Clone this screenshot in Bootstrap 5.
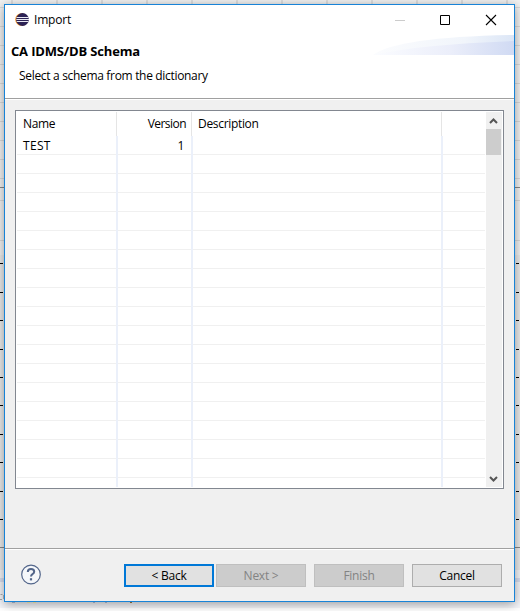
<!DOCTYPE html>
<html lang="en">
<head>
<meta charset="utf-8">
<meta name="viewport" content="width=device-width, initial-scale=1">
<title>Import</title>
<link href="https://cdn.jsdelivr.net/npm/bootstrap@5.3.0/dist/css/bootstrap.min.css" rel="stylesheet">
<style>
html, body { height: 611px; overflow: hidden; }
body { font-family: "Open Sans", "Noto Sans", sans-serif; font-size: 12px; letter-spacing: -.32px; line-height: 16px; color: #000; background: #fff; }
.desk { width: 520px; height: 611px; padding: 4px 5px 9px 4px; }
.backdrop { left: 0; top: 0; }
.dialog { width: 511px; height: 598px; border: 1px solid #1883d7; background: #f0f0f0; box-shadow: 0 2px 10px rgba(0,0,0,.38); }
.titlebar { height: 30px; padding-left: 10px; }
.title-text { margin-left: 5px; letter-spacing: -.2px; }
.heading-area { height: 63px; }
.banner-title { font-size: 13px; font-weight: 700; padding: 8px 0 0 6px; letter-spacing: -.16px; }
.banner-text { padding: 9px 0 0 14px; }
.wave { right: 0; top: 0; }
.win-controls { margin-right: 17px; }
.rule { height: 2px; background: #fff; border-top: 1px solid #a0a0a0; }
.content-area { height: 448px; padding: 10px; }
.grid-box { width: 489px; height: 379px; border: 1px solid #828790; background: #fff; padding: 1px; }
.grid-table { width: 468px; margin-right: 1px; }
.grid-head { height: 24px; }
.grid-head > div { border-right: 1px solid #e5e5e5; padding-top: 4px; }
.c1 { width: 100px; padding-left: 6px; }
.c2 { width: 75px; padding-right: 5px; text-align: right; }
.grid-head .c2 { letter-spacing: -.55px; }
.c3 { width: 250px; padding-left: 6px; }
.grid-body { height: 351px; overflow: hidden; }
.grid-body .grid-line { height: 19px; border-bottom: 1px solid #f0f0f0; flex: none; }
.grid-body .grid-line > div { height: 19px; border-right: 2px solid #ebf0fa; padding-top: 2px; }
.grid-body .c1 { width: 101px; letter-spacing: .3px; }
.grid-body .c2 { padding-right: 7px; }
.scroll { width: 16px; height: 375px; background: #f0f0f0; }
.thumb { width: 15px; height: 26px; background: #cdcdcd; }
.foot { height: 51px; padding: 14px 12px 0 15px; }
.dlg-btn { width: 90px; height: 23px; border: 1px solid #adadad; background: #e1e1e1; padding: 0; border-radius: 0; font-size: 12px; letter-spacing: -.25px; line-height: 21px; color: #000; }
.dlg-btn.primary { border: 2px solid #0078d7; line-height: 19px; }
.dlg-btn.next { margin-left: 2px; }
.dlg-btn:disabled { background: #ccc; border-color: #bfbfbf; color: #838383; opacity: 1; }
</style>
<script src="https://cdn.jsdelivr.net/npm/bootstrap@5.3.0/dist/js/bootstrap.bundle.min.js"></script>
</head>
<body>
<div class="desk position-relative">
  <svg class="backdrop position-absolute" width="520" height="611" shape-rendering="crispEdges">
    <rect width="520" height="570" fill="#f2f2f2"/>
    <rect y="255" width="520" height="315" fill="#ebebeb"/>
    <rect y="570" width="520" height="41" fill="#f4f5f9"/>
    <rect y="578" width="520" height="4" fill="#d9dff0"/>
    <rect y="608" width="520" height="3" fill="#fff"/>
    <path d="M12 0V5M57 0V5M102 0V5M147 0V5M192 0V5M237 0V5M282 0V5M327 0V5M372 0V5M417 0V5M462 0V5M507 0V5" stroke="#dedede" stroke-width="2"/>
    <path d="M0 7.500H520M0 26.500H520M0 45.500H520M0 64.500H520M0 83.500H520M0 102.500H520M0 121.500H520M0 140.500H520M0 159.500H520M0 178.500H520M0 200.500H520M0 240.500H520" stroke="#dadada"/>
    <path d="M0 187.500H520M0 547.500H520" stroke="#888"/>
  </svg>
  <main class="dialog position-relative">
    <div class="bg-white">
      <div class="titlebar d-flex align-items-center">
        <svg width="14" height="14" viewBox="0 0 14 14"><circle cx="6.500" cy="6.500" r="6.300" fill="#f7941e"/><circle cx="7.500" cy="6.500" r="6.400" fill="#2c2255"/><path d="M1.500 4.500H13.500M1.300 6.500H14M1.700 8.500H13.500" stroke="#e8e8f2"/></svg>
        <span class="title-text">Import</span>
        <svg class="win-controls ms-auto" width="104" height="12"><path d="M2 6.500H12" stroke="#ccc"/><path d="M47.500 1.500h9v9h-9z" fill="none" stroke="#000"/><path d="M93 1l10 10M103 1l-10 10" stroke="#000" stroke-width="1.100"/></svg>
      </div>
      <div class="heading-area position-relative">
        <svg class="wave position-absolute" width="141" height="20"><defs><linearGradient id="w"><stop stop-color="#fbfcff"/><stop offset=".55" stop-color="#ebeefa"/><stop offset="1" stop-color="#d0daf3"/></linearGradient><linearGradient id="w2"><stop stop-color="#fbfcfe"/><stop offset=".65" stop-color="#f1f5fb"/><stop offset="1" stop-color="#dce6f6"/></linearGradient></defs><path d="M0 20Q25 2 141 0V20Z" fill="url(#w2)"/><path d="M0 20Q50 9 141 6V20Z" fill="url(#w)"/></svg>
        <div class="banner-title">CA IDMS/DB Schema</div>
        <div class="banner-text">Select a schema from the dictionary</div>
      </div>
    </div>
    <div class="rule"></div>
    <div class="content-area">
      <div class="grid-box d-flex">
        <div class="grid-table">
          <div class="grid-head d-flex"><div class="c1">Name</div><div class="c2">Version</div><div class="c3">Description</div></div>
          <div class="grid-body d-flex flex-column" id="rows"></div>
        </div>
        <div class="scroll d-flex flex-column">
          <svg width="16" height="17"><path d="M4 11L7.500 7.500L11 11" fill="none" stroke="#555" stroke-width="2"/></svg>
          <div class="thumb"></div>
          <svg class="mt-auto" width="16" height="17"><path d="M4 7L7.500 10.500L11 7" fill="none" stroke="#555" stroke-width="2"/></svg>
        </div>
      </div>
    </div>
    <div class="rule"></div>
    <div class="foot d-flex">
      <svg width="22" height="22" viewBox="0 0 22 22" fill="none"><circle cx="11" cy="10.500" r="9.300" fill="#f5f7fa" stroke="#52658a" stroke-width="1.200"/><path d="M7.800 8Q7.800 5 11 5T14.200 7.700Q14.200 9.200 12.500 10.100Q11 11 11 12.600" stroke="#52658a" stroke-width="2"/><path d="M11 14.200v2.200" stroke="#52658a" stroke-width="2.200"/></svg>
      <div class="d-flex ms-auto">
        <button class="btn dlg-btn primary">&lt; Back</button>
        <button class="btn dlg-btn next" disabled>Next &gt;</button>
        <button class="btn dlg-btn ms-2" disabled>Finish</button>
        <button class="btn dlg-btn ms-2">Cancel</button>
      </div>
    </div>
  </main>
  <!-- table ruling and clipped captions that stay visible around the dialog -->
  <svg class="backdrop position-absolute" width="520" height="611">
    <path d="M0 263.500H3M0 292.500H3M0 320.500H3M0 349.500H3M0 377.500H3M0 405.500H3M0 434.500H3M0 462.500H3M0 491.500H3M0 519.500H3M516 263.500H519M516 292.500H519M516 320.500H519M516 349.500H519M516 377.500H519M516 405.500H519M516 434.500H519M516 462.500H519M516 491.500H519M516 519.500H519" stroke="#000"/>
    <path d="M2.500 594.500H.5M2 599.500H0M3.500 595v4" stroke="#999" fill="none"/>
    <path d="M12 602.500h3M93 602.500h2M105 602.500h2" stroke="#8a94a8"/>
    <path d="M27 602.500h3M33 602.500h3" stroke="#c9c08c"/>
    <path d="M130 602.500h2" stroke="#7a5c30"/>
  </svg>
</div>
<script>
const rows = document.getElementById('rows');
for (let i = 0; i < 19; i++) {
  const first = i === 0;
  rows.insertAdjacentHTML('beforeend', `<div class="grid-line d-flex"><div class="c1">${first ? 'TEST' : ''}</div><div class="c2">${first ? '1' : ''}</div><div class="c3"></div></div>`);
}
</script>
</body>
</html>
